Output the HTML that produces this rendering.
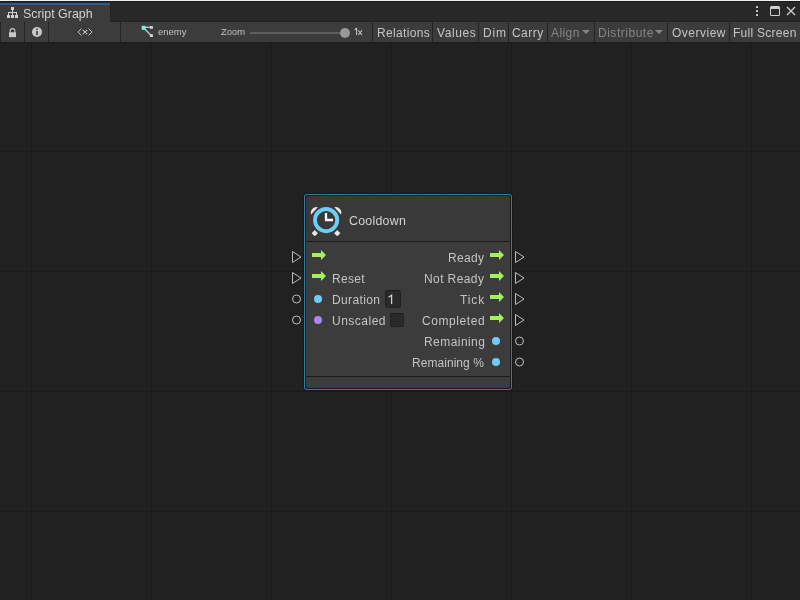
<!DOCTYPE html>
<html><head><meta charset="utf-8">
<style>
*{margin:0;padding:0;box-sizing:border-box}
html,body{width:800px;height:600px;overflow:hidden;background:#212121;font-family:"Liberation Sans",sans-serif;}
.a{position:absolute}
.t{position:absolute;will-change:transform;white-space:nowrap;line-height:12px;font-size:12px;color:#c4c4c4}
</style></head><body>
<!-- graph grid -->
<svg class="a" style="left:0;top:0" width="800" height="600">
<defs>
<pattern id="minv" x="7" y="0" width="12" height="600" patternUnits="userSpaceOnUse">
<rect x="0" y="0" width="1" height="600" fill="#202020"/>
</pattern>
<pattern id="minh" x="0" y="7" width="800" height="12" patternUnits="userSpaceOnUse">
<rect x="0" y="0" width="800" height="1" fill="#202020"/>
</pattern>
</defs>
<rect x="0" y="42" width="800" height="558" fill="#212121"/>
<rect x="0" y="42" width="800" height="558" fill="url(#minh)"/>
<rect x="0" y="42" width="800" height="558" fill="url(#minv)"/>
<g fill="#1b1b1b">
<rect x="31" y="42" width="1" height="558"/><rect x="151" y="42" width="1" height="558"/>
<rect x="271" y="42" width="1" height="558"/><rect x="391" y="42" width="1" height="558"/>
<rect x="511" y="42" width="1" height="558"/><rect x="631" y="42" width="1" height="558"/>
<rect x="751" y="42" width="1" height="558"/>
<rect x="0" y="151" width="800" height="1"/><rect x="0" y="271" width="800" height="1"/>
<rect x="0" y="391" width="800" height="1"/><rect x="0" y="511" width="800" height="1"/>
</g>
</svg>

<!-- top strip -->
<div class="a" style="left:0;top:0;width:800px;height:1px;background:#f0f0f0"></div>
<div class="a" style="left:0;top:1px;width:800px;height:21px;background:#282828"></div>
<div class="a" style="left:0;top:1px;width:800px;height:1px;background:#1b1b1b"></div>
<div class="a" style="left:0;top:21px;width:800px;height:1px;background:#232323"></div>
<!-- tab -->
<div class="a" style="left:0;top:3px;width:110px;height:19px;background:#3c3c3c;border-top:2px solid #2c5d8e"></div>
<div class="a" style="left:110px;top:3px;width:1px;height:19px;background:#232323"></div>
<svg class="a" style="left:6px;top:6px" width="14" height="14" viewBox="0 0 14 14" fill="#d0d0d0">
<rect x="5" y="1" width="3" height="3"/>
<rect x="6" y="4" width="1" height="3"/>
<rect x="2" y="6" width="9" height="1"/>
<rect x="2" y="6" width="1" height="3"/><rect x="6" y="6" width="1" height="3"/><rect x="10" y="6" width="1" height="3"/>
<rect x="1" y="9" width="3" height="3"/><rect x="5" y="9" width="3" height="3"/><rect x="9" y="9" width="3" height="3"/>
</svg>
<div class="t" style="left:23px;top:8px;font-size:12.4px;color:#d2d2d2">Script Graph</div>
<!-- window buttons -->
<div class="a" style="left:756px;top:6px;width:2px;height:2px;background:#d0d0d0;border-radius:0.6px"></div>
<div class="a" style="left:756px;top:10px;width:2px;height:2px;background:#d0d0d0;border-radius:0.6px"></div>
<div class="a" style="left:756px;top:14px;width:2px;height:2px;background:#d0d0d0;border-radius:0.6px"></div>
<div class="a" style="left:770px;top:6px;width:10px;height:10px;border:1px solid #d0d0d0;border-top-width:3px;border-radius:1.5px"></div>
<svg class="a" style="left:786px;top:6px" width="10" height="10" viewBox="0 0 10 10"><path d="M1 1L9 9M9 1L1 9" stroke="#d0d0d0" stroke-width="1.3"/></svg>

<!-- toolbar -->
<div class="a" style="left:0;top:22px;width:800px;height:20px;background:#3c3c3c"></div>
<div class="a" style="left:0;top:42px;width:800px;height:1px;background:#1c1c1c"></div>
<div class="a" style="left:0;top:22px;width:1px;height:20px;background:#232323"></div>
<div class="a" style="left:24px;top:22px;width:1px;height:20px;background:#232323"></div>
<div class="a" style="left:48px;top:22px;width:1px;height:20px;background:#232323"></div>
<div class="a" style="left:120px;top:22px;width:1px;height:20px;background:#232323"></div>
<div class="a" style="left:372px;top:22px;width:1px;height:20px;background:#232323"></div>
<div class="a" style="left:432px;top:22px;width:1px;height:20px;background:#232323"></div>
<div class="a" style="left:478px;top:22px;width:1px;height:20px;background:#232323"></div>
<div class="a" style="left:508px;top:22px;width:1px;height:20px;background:#232323"></div>
<div class="a" style="left:547px;top:22px;width:1px;height:20px;background:#232323"></div>
<div class="a" style="left:594px;top:22px;width:1px;height:20px;background:#232323"></div>
<div class="a" style="left:667px;top:22px;width:1px;height:20px;background:#232323"></div>
<div class="a" style="left:729px;top:22px;width:1px;height:20px;background:#232323"></div>
<!-- lock -->
<svg class="a" style="left:8px;top:27px" width="10" height="12" viewBox="0 0 10 12">
<path d="M2.1 5.6V4A2.4 2.4 0 0 1 6.9 4V5.6" fill="none" stroke="#c8c8c8" stroke-width="1.05"/>
<rect x="1" y="5.25" width="7" height="4.85" fill="#c8c8c8"/>
</svg>
<!-- info -->
<svg class="a" style="left:32px;top:27px" width="10" height="10" viewBox="0 0 10 10">
<circle cx="5" cy="5" r="5" fill="#c8c8c8"/>
<rect x="4.2" y="1.6" width="1.6" height="1.4" fill="#3c3c3c"/>
<rect x="4.2" y="4" width="1.6" height="4" fill="#3c3c3c"/>
</svg>
<!-- <x> -->
<svg class="a" style="left:77px;top:27px" width="16" height="10" viewBox="0 0 16 10">
<path d="M4.5 1.5L1 5l3.5 3.5M11.5 1.5L15 5l-3.5 3.5M6.5 3.5l3 3M9.5 3.5l-3 3" fill="none" stroke="#c4c4c4" stroke-width="0.95"/><g fill="#d0d0d0"><rect x="5.8" y="2.9" width="1.3" height="1.3"/><rect x="8.9" y="2.9" width="1.3" height="1.3"/><rect x="5.8" y="5.9" width="1.3" height="1.3"/><rect x="8.9" y="5.9" width="1.3" height="1.3"/></g>
</svg>
<!-- enemy icon -->
<svg class="a" style="left:141px;top:25px" width="13" height="13" viewBox="0 0 13 13">
<defs>
<linearGradient id="gh" gradientUnits="userSpaceOnUse" x1="4" y1="0" x2="7.5" y2="0"><stop offset="0" stop-color="#7fe0d0"/><stop offset="1" stop-color="#bcbcbc"/></linearGradient>
<linearGradient id="gd" gradientUnits="userSpaceOnUse" x1="4" y1="4" x2="8.5" y2="8.5"><stop offset="0" stop-color="#7fe0d0"/><stop offset="1" stop-color="#bcbcbc"/></linearGradient>
</defs>
<rect x="3" y="1.6" width="7" height="1.4" fill="url(#gh)"/>
<path d="M3 3.2L10.2 10.6" stroke="url(#gd)" stroke-width="1.5"/>
<rect x="0.7" y="0.8" width="3.8" height="4.1" fill="#78f0dc"/>
<rect x="8.9" y="1.1" width="3" height="2.7" fill="#d4d4d4"/>
<rect x="8.9" y="9.2" width="3" height="2.8" fill="#d4d4d4"/>
</svg>
<div class="t" style="left:158px;top:26px;font-size:9.5px;color:#c4c4c4">enemy</div>
<div class="t" style="left:221px;top:25.8px;font-size:9.8px;color:#c4c4c4;transform:scaleX(0.95);transform-origin:0 0">Zoom</div>
<div class="a" style="left:250px;top:32px;width:92px;height:2px;background:#5e5e5e"></div>
<div class="a" style="left:340px;top:28px;width:10px;height:10px;border-radius:50%;background:#999"></div>
<svg class="a" style="left:353px;top:27px" width="11" height="10" viewBox="0 0 11 10"><path d="M1.6 2.7L3.6 1.3V8M5.3 3.4L9 8M9 3.4L5.3 8" fill="none" stroke="#c4c4c4" stroke-width="1.05"/></svg>
<div class="t" style="left:377px;top:27px;letter-spacing:0.34px">Relations</div>
<div class="t" style="left:437px;top:27px;letter-spacing:0.6px">Values</div>
<div class="t" style="left:483px;top:27px;letter-spacing:0.8px">Dim</div>
<div class="t" style="left:512px;top:27px;letter-spacing:0.45px">Carry</div>
<div class="t" style="left:551px;top:27px;color:#858585;letter-spacing:0.42px">Align</div>
<svg class="a" style="left:582px;top:30px" width="8" height="4"><path d="M0 0H8L4 4Z" fill="#858585"/></svg>
<div class="t" style="left:598px;top:27px;color:#858585;letter-spacing:0.52px">Distribute</div>
<svg class="a" style="left:655px;top:30px" width="8" height="4"><path d="M0 0H8L4 4Z" fill="#858585"/></svg>
<div class="t" style="left:672px;top:27px;letter-spacing:0.5px">Overview</div>
<div class="t" style="left:733px;top:27px;letter-spacing:0.27px">Full Screen</div>

<!-- node -->
<div class="a" style="left:303px;top:193px;width:210px;height:198px;border-radius:4px;background:rgba(0,0,0,0.25)"></div>
<div class="a" style="left:304px;top:194px;width:208px;height:196px;border-radius:3px;background:#377ba2"></div>
<div class="a" style="left:305px;top:195px;width:206px;height:194px;border-radius:2px;background:#1b1b1b"></div>
<div class="a" style="left:306px;top:196px;width:204px;height:45px;border-radius:2px 2px 0 0;background:#393939"></div>
<div class="a" style="left:306px;top:242px;width:204px;height:134px;background:#3c3c3c"></div>
<div class="a" style="left:306px;top:377px;width:204px;height:11px;border-radius:0 0 2px 2px;background:#3c3c3c"></div>

<!-- clock icon -->
<svg class="a" style="left:310px;top:204px" width="32" height="32" viewBox="0 0 32 32">
<path d="M1.2 10.6A5.6 5.6 0 0 1 7.8 3.2Z" fill="#e8e8e8"/>
<path d="M31 10.6A5.6 5.6 0 0 0 24.4 3.2Z" fill="#e8e8e8"/>
<rect x="2.6" y="27" width="4.4" height="4.4" transform="rotate(45 4.8 29.2)" fill="#e8e8e8"/>
<rect x="25.05" y="27" width="4.4" height="4.4" transform="rotate(45 27.25 29.2)" fill="#e8e8e8"/>
<circle cx="16.1" cy="16.1" r="11.1" fill="none" stroke="#6ecdf5" stroke-width="3.9"/>
<path d="M16 9V16H23" fill="none" stroke="#ffffff" stroke-width="2.3"/>
</svg>
<div class="t" style="left:349px;top:215px;font-size:12.4px;color:#d2d2d2;letter-spacing:0.24px">Cooldown</div>

<!-- input ports outside -->
<svg class="a" style="left:290px;top:248px" width="14" height="80" viewBox="0 0 14 80">
<path d="M2.5 3.5L11 9L2.5 14.5Z" fill="none" stroke="#c4c4c4" stroke-width="0.95"/>
<path d="M2.5 24.5L11 30L2.5 35.5Z" fill="none" stroke="#c4c4c4" stroke-width="0.95"/>
<circle cx="6.5" cy="51" r="4" fill="none" stroke="#c4c4c4" stroke-width="0.95"/>
<circle cx="6.5" cy="72" r="4" fill="none" stroke="#c4c4c4" stroke-width="0.95"/>
</svg>
<!-- output ports outside -->
<svg class="a" style="left:513px;top:248px" width="14" height="122" viewBox="0 0 14 122">
<path d="M2.5 3.5L11 9L2.5 14.5Z" fill="none" stroke="#c4c4c4" stroke-width="0.95"/>
<path d="M2.5 24.5L11 30L2.5 35.5Z" fill="none" stroke="#c4c4c4" stroke-width="0.95"/>
<path d="M2.5 45.5L11 51L2.5 56.5Z" fill="none" stroke="#c4c4c4" stroke-width="0.95"/>
<path d="M2.5 66.5L11 72L2.5 77.5Z" fill="none" stroke="#c4c4c4" stroke-width="0.95"/>
<circle cx="6.5" cy="93" r="4" fill="none" stroke="#c4c4c4" stroke-width="0.95"/>
<circle cx="6.5" cy="114" r="4" fill="none" stroke="#c4c4c4" stroke-width="0.95"/>
</svg>

<!-- inner ports -->
<svg class="a" style="left:306px;top:242px" width="204" height="134" viewBox="0 0 204 134">
<defs><path id="arr" d="M0 3H9V0L14 5L9 10V7H0Z" fill="#a4f25a"/></defs>
<use href="#arr" x="6" y="8"/>
<use href="#arr" x="6" y="29"/>
<circle cx="12" cy="57" r="4" fill="#6ecdf5"/>
<circle cx="12" cy="78" r="4" fill="#ad85f0"/>
<use href="#arr" x="184" y="8"/>
<use href="#arr" x="184" y="29"/>
<use href="#arr" x="184" y="50"/>
<use href="#arr" x="184" y="71"/>
<circle cx="190" cy="99" r="4" fill="#6ecdf5"/>
<circle cx="190" cy="120" r="4" fill="#6ecdf5"/>
</svg>

<div class="t" style="left:332px;top:273px;letter-spacing:0.3px">Reset</div>
<div class="t" style="left:332px;top:294px;letter-spacing:0.37px">Duration</div>
<div class="t" style="left:332px;top:315px;letter-spacing:0.5px">Unscaled</div>
<div class="a" style="left:385px;top:290px;width:16px;height:18px;border-radius:3px;background:#2a2a2a;border:1px solid #212121;border-top-color:#1c1c1c"></div>
<svg class="a" style="left:386px;top:293px" width="10" height="13" viewBox="0 0 10 13"><path d="M2.6 4.3L5.6 2.2V11" fill="none" stroke="#d0d0d0" stroke-width="1.25"/></svg>
<div class="a" style="left:390px;top:313px;width:14px;height:14px;border-radius:2px;background:#2a2a2a;border:1px solid #212121;border-top-color:#1c1c1c"></div>

<div class="t" style="right:316px;top:252px;letter-spacing:0.35px;margin-right:-0.35px">Ready</div>
<div class="t" style="right:316px;top:273px;letter-spacing:0.4px;margin-right:-0.4px">Not Ready</div>
<div class="t" style="right:316px;top:294px;letter-spacing:0.9px;margin-right:-0.9px">Tick</div>
<div class="t" style="right:316px;top:315px;letter-spacing:0.57px;margin-right:-1.2px">Completed</div>
<div class="t" style="right:316px;top:336px;letter-spacing:0.44px;margin-right:-1.1px">Remaining</div>
<div class="t" style="right:316px;top:357px;letter-spacing:0.05px;margin-right:-0.05px">Remaining %</div>
</body></html>
